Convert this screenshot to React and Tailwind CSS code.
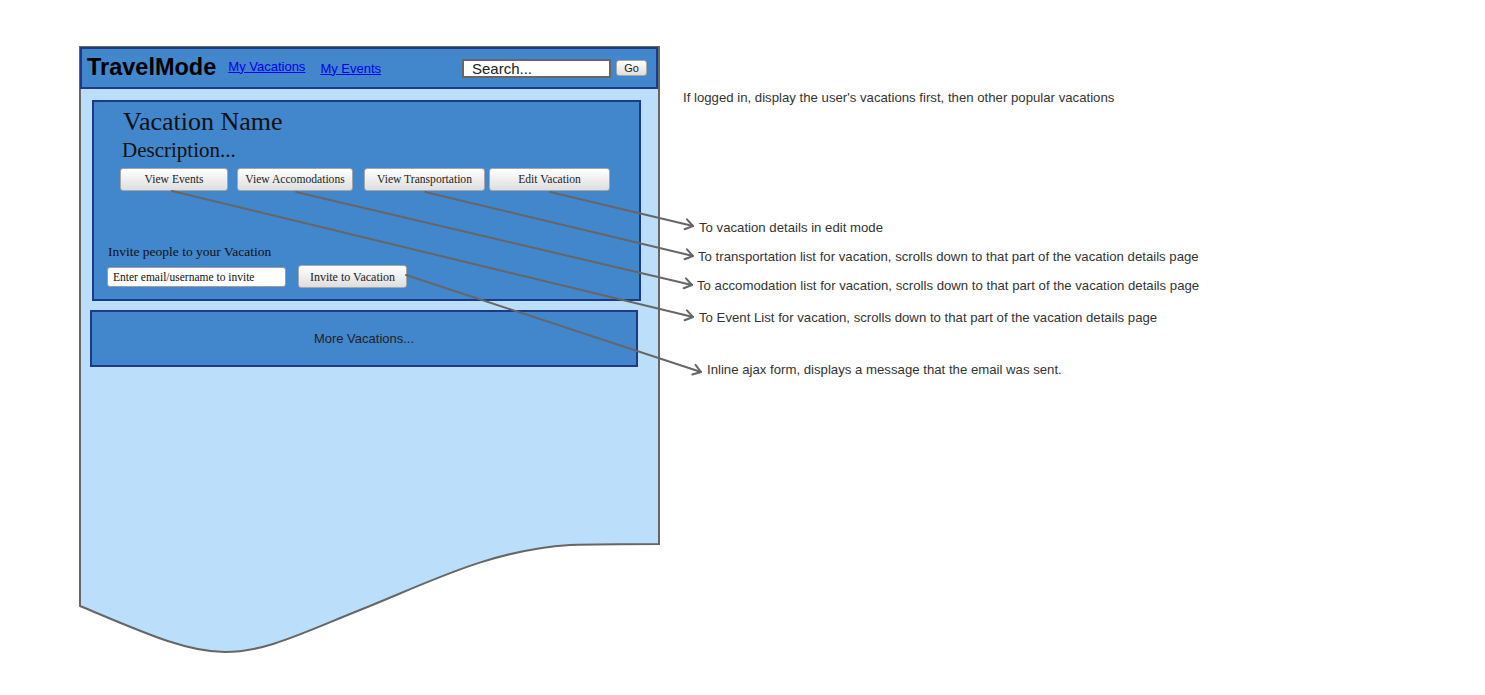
import React from "react";

const serif = "font-['Liberation_Serif','Times_New_Roman',serif]";
const sans = "font-['Liberation_Sans',Arial,sans-serif]";

const notes = [
  { text: "If logged in, display the user's vacations first, then other popular vacations", x: 683, y: 90 },
  { text: "To vacation details in edit mode", x: 699, y: 220 },
  { text: "To transportation list for vacation, scrolls down to that part of the vacation details page", x: 698, y: 249 },
  { text: "To accomodation list for vacation, scrolls down to that part of the vacation details page", x: 697, y: 278 },
  { text: "To Event List for vacation, scrolls down to that part of the vacation details page", x: 699, y: 310 },
  { text: "Inline ajax form, displays a message that the email was sent.", x: 707, y: 362 },
];

// line start (on the wireframe) -> arrow tip (next to a note)
const arrows = [
  [550, 192, 693, 226],
  [425, 192, 693, 256],
  [296, 192, 692, 285],
  [172, 191, 693, 317],
  [406, 275, 701, 372],
];

const Btn = ({ children, className = "" }) => (
  <button
    className={
      "h-[23px] shrink-0 rounded-[3px] border border-[#a6a6a6] bg-linear-to-b from-white to-[#dedede] text-[11.6px] leading-none text-[#222] " +
      serif +
      " " +
      className
    }
  >
    {children}
  </button>
);

const Arrow = ({ x1, y1, x2, y2 }) => {
  const t = Math.atan2(y2 - y1, x2 - x1);
  const a = 0.6;
  const len = 9;
  const p1 = [x2 - len * Math.cos(t - a), y2 - len * Math.sin(t - a)];
  const p2 = [x2 - len * Math.cos(t + a), y2 - len * Math.sin(t + a)];
  return (
    <g>
      <line x1={x1} y1={y1} x2={x2} y2={y2} />
      <polyline points={`${p1[0]},${p1[1]} ${x2},${y2} ${p2[0]},${p2[1]}`} />
    </g>
  );
};

const Wireframe = () => (
  <div className="absolute left-[79px] top-[46px] h-[608px] w-[581px]">
    {/* page outline with torn bottom edge */}
    <svg className="absolute inset-0" width="581" height="608" viewBox="0 0 581 608">
      <path
        d="M1,1 H580 V498 C551,498 521,498 491,499 C411,504 351,536 281,564 C221,588 186,606 146,606 C106,606 61,585 1,560 Z"
        fill="#bbdefb"
        stroke="#666"
        strokeWidth="2"
      />
    </svg>

    <div className="relative flex flex-col">
      {/* header */}
      <div className="ml-[1px] mt-[1px] flex h-[42px] w-[578px] items-center border-2 border-[#1d3a8a] bg-[#4286cc] pl-[5px] pr-[9px]">
        <span className={"text-[23.5px] font-bold leading-none text-black " + sans}>TravelMode</span>
        <a href="#" className={"mb-[4px] ml-[12px] text-[13px] leading-none text-[#0000ee] underline " + sans}>
          My Vacations
        </a>
        <a href="#" className={"ml-[15px] text-[13px] leading-none text-[#0000ee] underline " + sans}>
          My Events
        </a>
        <div className="ml-auto flex items-center">
          <div className={"flex h-[19px] w-[149px] items-center border-2 border-[#666] bg-white pl-[8px] text-[15px] leading-none text-[#222] " + sans}>
            Search...
          </div>
          <button
            className={"ml-[5px] h-[16px] w-[31px] rounded-[3px] border border-[#a6a6a6] bg-linear-to-b from-white to-[#dedede] text-[11px] leading-none text-[#222] " + sans}
          >
            Go
          </button>
        </div>
      </div>

      {/* featured vacation */}
      <div className="ml-[13px] mt-[11px] flex w-[549px] flex-col border-2 border-[#1d3a8a] bg-[#4286cc] pb-[11px] pl-[13px] pt-[6px]">
        <div className={"ml-[16px] text-[26px] leading-[28px] text-[#111] " + serif}>Vacation Name</div>
        <div className={"ml-[15px] mt-[1px] text-[21px] leading-[26px] text-[#111] " + serif}>Description...</div>
        <div className="ml-[13px] mt-[5px] flex">
          <Btn className="w-[108px]">View Events</Btn>
          <Btn className="ml-[9px] w-[116px]">View Accomodations</Btn>
          <Btn className="ml-[11px] w-[121px]">View Transportation</Btn>
          <Btn className="ml-[4px] w-[121px]">Edit Vacation</Btn>
        </div>
        <div className={"ml-[1px] mt-[53px] text-[13.5px] leading-[16px] text-[#111] " + serif}>
          Invite people to your Vacation
        </div>
        <div className="mt-[5px] flex h-[23px] items-center">
          <input
            readOnly
            value="Enter email/username to invite"
            className={"h-[20px] w-[179px] rounded-[3px] border border-[#9d9d9d] bg-white pl-[5px] text-[11.5px] text-[#111] outline-none " + serif}
          />
          <Btn className="ml-[12px] w-[109px] text-[12px]">Invite to Vacation</Btn>
        </div>
      </div>

      {/* more vacations */}
      <div className="ml-[11px] mt-[9px] flex h-[57px] w-[548px] items-center justify-center border-2 border-[#1d3a8a] bg-[#4286cc]">
        <span className={"text-[13px] leading-none text-[#222] " + sans}>More Vacations...</span>
      </div>
    </div>
  </div>
);

export default function App() {
  return (
    <div className="relative h-[695px] w-[1485px] overflow-hidden bg-white">
      <Wireframe />

      {notes.map((n) => (
        <div
          key={n.text}
          className={"absolute whitespace-nowrap text-[13.2px] leading-[15px] text-[#333] " + sans}
          style={{ left: n.x, top: n.y }}
        >
          {n.text}
        </div>
      ))}

      <svg
        className="pointer-events-none absolute inset-0"
        width="1485"
        height="695"
        fill="none"
        stroke="#666"
        strokeWidth="2"
        strokeLinecap="round"
        strokeLinejoin="round"
      >
        {arrows.map(([x1, y1, x2, y2], i) => (
          <Arrow key={i} x1={x1} y1={y1} x2={x2} y2={y2} />
        ))}
      </svg>
    </div>
  );
}
